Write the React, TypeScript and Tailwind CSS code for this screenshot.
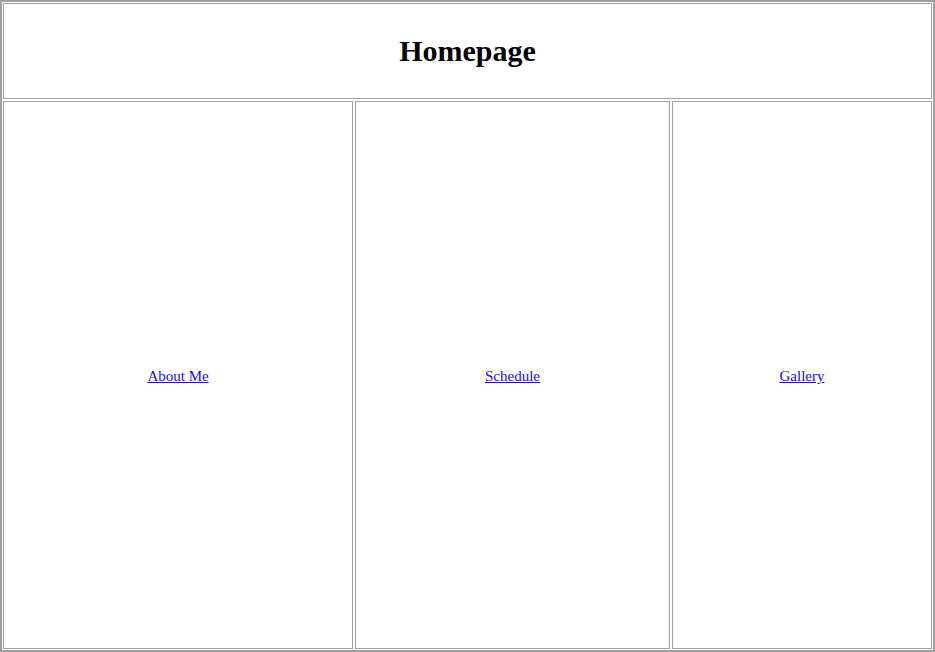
const links = [
  { href: "#about", label: "About Me", width: "w-[350px]" },
  { href: "#schedule", label: "Schedule", width: "w-[315px]" },
  { href: "#gallery", label: "Gallery", width: "w-[260px]" },
] as const;

export default function App() {
  return (
    <div
      className="w-[935px] h-[652px] bg-white border-2 border-[#a0a0a0] p-[1px] flex flex-col gap-[2px]"
      style={{ fontFamily: '"Liberation Serif", "Times New Roman", serif' }}
    >
      <div className="h-[96px] border border-[#a0a0a0] flex items-center justify-center">
        <h1 className="text-[30px] font-bold text-black leading-none">Homepage</h1>
      </div>
      <div className="flex-1 flex gap-[2px]">
        {links.map((l) => (
          <div key={l.href} className={`${l.width} h-full border border-[#a0a0a0] flex items-center justify-center`}>
            <a href={l.href} className="text-[15px] text-[#1a0ddc] underline mt-[2px]">
              {l.label}
            </a>
          </div>
        ))}
      </div>
    </div>
  );
}
